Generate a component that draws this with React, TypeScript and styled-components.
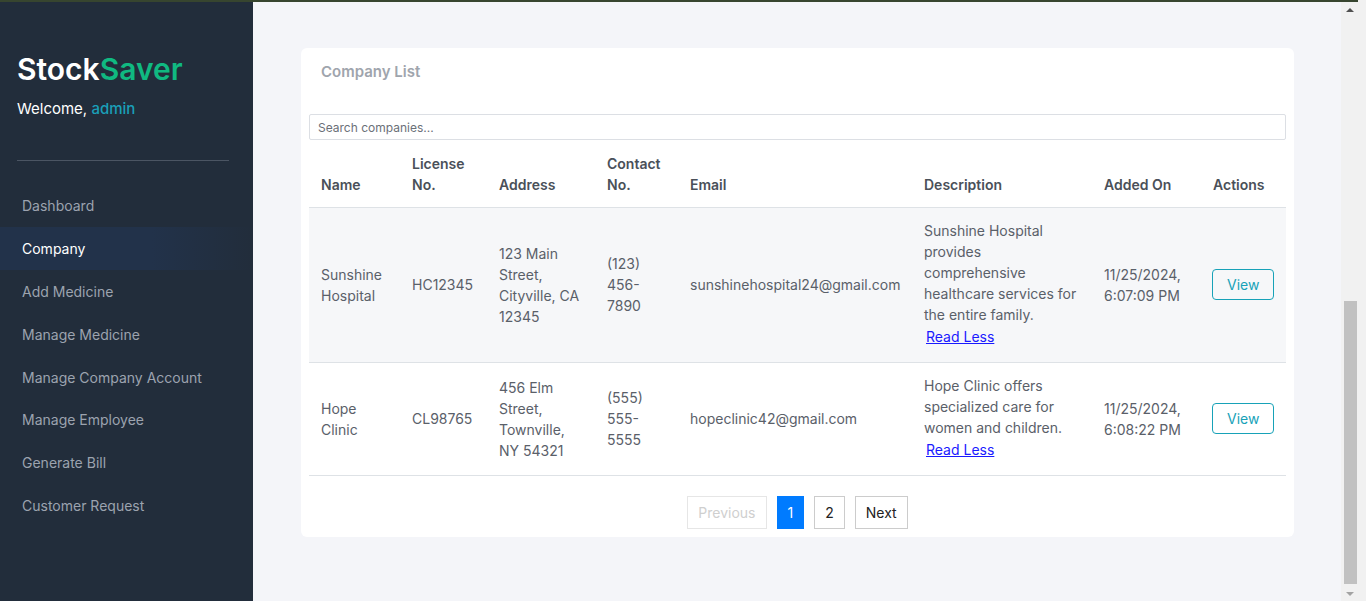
import { ReactElement } from 'react';
import styled, { createGlobalStyle } from 'styled-components';

/** Types */
interface Company {
    name: string;
    license: string;
    address: string;
    contact: string;
    email: string;
    description: string;
    addedOn: string[];
}

interface NavItemProps {
    $active?: boolean;
}

interface RowProps {
    $striped?: boolean;
}

interface PageButtonProps {
    $active?: boolean;
    disabled?: boolean;
}

/** Data */
const navItems = [
    'Dashboard',
    'Company',
    'Add Medicine',
    'Manage Medicine',
    'Manage Company Account',
    'Manage Employee',
    'Generate Bill',
    'Customer Request',
];

const columns: { label: string; width: number }[] = [
    { label: 'Name', width: 91 },
    { label: 'License No.', width: 87 },
    { label: 'Address', width: 108 },
    { label: 'Contact No.', width: 83 },
    { label: 'Email', width: 234 },
    { label: 'Description', width: 180 },
    { label: 'Added On', width: 109 },
    { label: 'Actions', width: 85 },
];

const companies: Company[] = [
    {
        name: 'Sunshine Hospital',
        license: 'HC12345',
        address: '123 Main Street, Cityville, CA 12345',
        contact: '(123) 456-7890',
        email: 'sunshinehospital24@gmail.com',
        description:
            'Sunshine Hospital provides comprehensive healthcare services for the entire family.',
        addedOn: ['11/25/2024,', '6:07:09 PM'],
    },
    {
        name: 'Hope Clinic',
        license: 'CL98765',
        address: '456 Elm Street, Townville, NY 54321',
        contact: '(555) 555-5555',
        email: 'hopeclinic42@gmail.com',
        description: 'Hope Clinic offers specialized care for women and children.',
        addedOn: ['11/25/2024,', '6:08:22 PM'],
    },
];

/** Global */
const GlobalStyle = createGlobalStyle`
    * {
        box-sizing: border-box;
    }
    body {
        margin: 0;
        font-family: Inter, 'Noto Sans', sans-serif;
        overflow: hidden;
    }
`;

/** Frame */
const Window = styled.div`
    display: flex;
    height: 100vh;
    background: #f1f1f1;
`;

const Viewport = styled.div`
    flex: 1;
    display: flex;
    flex-direction: column;
    min-width: 0;
`;

const TopEdge = styled.div`
    height: 2px;
    background: #37452f;
`;

const Layout = styled.div`
    flex: 1;
    display: flex;
    min-height: 0;
`;

const FrameEdge = styled.div`
    width: 8px;
    background: #f1f1f1;
`;

/** Sidebar */
const Sidebar = styled.aside`
    width: 253px;
    flex-shrink: 0;
    background: #222d3b;
    padding-top: 49px;
`;

const Brand = styled.div`
    padding: 0 24px 0 17px;
`;

const Logo = styled.h1`
    margin: 0;
    font-size: 30px;
    line-height: 36px;
    font-weight: 600;
    color: #ffffff;

    span {
        color: #10b981;
    }
`;

const Welcome = styled.p`
    margin: 10px 0 0;
    font-size: 15px;
    line-height: 24px;
    color: #ffffff;

    span {
        color: #1a9fb8;
        font-weight: 500;
    }
`;

const Divider = styled.hr`
    margin: 39px 0 23px;
    border: none;
    border-top: 1px solid #4b5563;
`;

const Nav = styled.nav`
    display: flex;
    flex-direction: column;
`;

const NavItem = styled.a<NavItemProps>`
    height: 42.8px;
    display: flex;
    align-items: center;
    padding: 1px 22px 0;
    font-size: 14px;
    color: ${(props) => (props.$active ? '#ffffff' : '#9ca3af')};
    background: ${(props) =>
        props.$active
            ? 'linear-gradient(90deg, #22324a 0%, #22324a 60%, #222d3b 100%)'
            : 'transparent'};
    text-decoration: none;
`;

/** Main */
const Main = styled.main`
    flex: 1;
    background: #f4f5f9;
    padding: 46px 47px 0 48px;
    min-width: 0;
`;

const Card = styled.section`
    background: #ffffff;
    border-radius: 6px;
    padding: 0 8px 8px;
`;

const CardTitle = styled.h2`
    margin: 0;
    padding: 13px 12px 0;
    font-size: 15px;
    line-height: 22px;
    font-weight: 600;
    color: #9fa5ad;
`;

const SearchInput = styled.input`
    display: block;
    width: 100%;
    height: 26px;
    margin-top: 31px;
    padding: 0 8px;
    border: 1px solid #dcdfe4;
    border-radius: 2px;
    font-family: Inter, sans-serif;
    font-size: 12px;
    color: #333;
    outline: none;

    &::placeholder {
        color: #6b7078;
    }
`;

const Table = styled.table`
    width: 100%;
    table-layout: fixed;
    border-collapse: collapse;
    font-size: 14px;
    line-height: 21px;
`;

const Th = styled.th`
    padding: 13px 12px 12px;
    text-align: left;
    vertical-align: bottom;
    font-weight: 600;
    color: #4a5059;
    border-bottom: 1px solid #dee2e6;
`;

const Tr = styled.tr<RowProps>`
    background: ${(props) => (props.$striped ? '#f6f7f9' : '#ffffff')};
    border-bottom: 1px solid #dee2e6;
`;

const Td = styled.td`
    padding: 12px 12px 13px;
    vertical-align: middle;
    color: #5a6069;
`;

const ReadLess = styled.button`
    display: block;
    margin: 0;
    padding: 2px;
    border: none;
    background: none;
    font-family: Inter, sans-serif;
    font-size: 14px;
    line-height: 20px;
    color: #1a1aff;
    text-decoration: underline;
    cursor: pointer;
`;

const ViewButton = styled.button`
    margin-left: -1px;
    padding: 4px 14px;
    border: 1px solid #17a2b8;
    border-radius: 4px;
    background: transparent;
    font-family: Inter, sans-serif;
    font-size: 14px;
    line-height: 21px;
    color: #17a2b8;
    cursor: pointer;
`;

const Pagination = styled.div`
    display: flex;
    justify-content: center;
    gap: 10px;
    margin-top: 20px;
`;

const PageButton = styled.button<PageButtonProps>`
    padding: 5px 10px;
    font-family: Inter, sans-serif;
    font-size: 14px;
    line-height: 21px;
    border-radius: 0;
    border: 1px solid
        ${(props) =>
            props.$active ? '#007bff' : props.disabled ? '#e6e6e6' : '#cccccc'};
    background: ${(props) => (props.$active ? '#007bff' : '#ffffff')};
    color: ${(props) =>
        props.$active ? '#ffffff' : props.disabled ? '#cfcfcf' : '#222222'};
`;

/** Scrollbar */
const Scrollbar = styled.div`
    width: 17px;
    flex-shrink: 0;
    display: flex;
    flex-direction: column;
    background: #f1f1f1;
`;

const ScrollArrow = styled.div<{ $up?: boolean; $muted?: boolean }>`
    height: 15px;
    display: flex;
    align-items: center;
    justify-content: center;

    &::before {
        content: '';
        border-left: 4px solid transparent;
        border-right: 4px solid transparent;
        ${(props) =>
            props.$up
                ? 'border-bottom: 4px solid #505050;'
                : `border-top: 4px solid ${props.$muted ? '#a3a3a3' : '#505050'};`}
    }
`;

const ScrollTrack = styled.div`
    flex: 1;
    display: flex;
    flex-direction: column;
    justify-content: flex-end;
    padding-bottom: 2px;
`;

const ScrollThumb = styled.div`
    height: 283px;
    margin: 0 1px 0 3px;
    background: #c1c1c1;
`;

/**
 * Company list page
 */
const App = (): ReactElement => {
    return (
        <>
            <GlobalStyle />
            <Window>
                <Viewport>
                    <TopEdge />
                    <Layout>
                        <Sidebar>
                            <Brand>
                                <Logo>
                                    Stock<span>Saver</span>
                                </Logo>
                                <Welcome>
                                    Welcome, <span>admin</span>
                                </Welcome>
                                <Divider />
                            </Brand>
                            <Nav>
                                {navItems.map((item) => (
                                    <NavItem key={item} $active={item === 'Company'}>
                                        {item}
                                    </NavItem>
                                ))}
                            </Nav>
                        </Sidebar>
                        <Main>
                            <Card>
                                <CardTitle>Company List</CardTitle>
                                <SearchInput placeholder="Search companies..." />
                                <Table>
                                    <colgroup>
                                        {columns.map((col) => (
                                            <col key={col.label} style={{ width: col.width }} />
                                        ))}
                                    </colgroup>
                                    <thead>
                                        <tr>
                                            {columns.map((col) => (
                                                <Th key={col.label}>{col.label}</Th>
                                            ))}
                                        </tr>
                                    </thead>
                                    <tbody>
                                        {companies.map((c, i) => (
                                            <Tr key={c.license} $striped={i % 2 === 0}>
                                                <Td>{c.name}</Td>
                                                <Td>{c.license}</Td>
                                                <Td>{c.address}</Td>
                                                <Td>{c.contact}</Td>
                                                <Td>{c.email}</Td>
                                                <Td>
                                                    {c.description}
                                                    <ReadLess>Read Less</ReadLess>
                                                </Td>
                                                <Td>
                                                    {c.addedOn[0]}
                                                    <br />
                                                    {c.addedOn[1]}
                                                </Td>
                                                <Td>
                                                    <ViewButton>View</ViewButton>
                                                </Td>
                                            </Tr>
                                        ))}
                                    </tbody>
                                </Table>
                                <Pagination>
                                    <PageButton disabled>Previous</PageButton>
                                    <PageButton $active>1</PageButton>
                                    <PageButton>2</PageButton>
                                    <PageButton>Next</PageButton>
                                </Pagination>
                            </Card>
                        </Main>
                        <Scrollbar>
                            <ScrollArrow $up />
                            <ScrollTrack>
                                <ScrollThumb />
                            </ScrollTrack>
                            <ScrollArrow $muted />
                        </Scrollbar>
                    </Layout>
                </Viewport>
                <FrameEdge />
            </Window>
        </>
    );
};

export default App;
